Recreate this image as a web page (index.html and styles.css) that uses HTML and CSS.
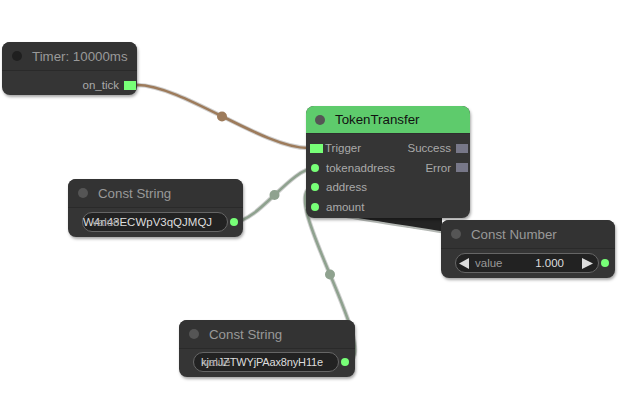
FILE: index.html
```html
<!DOCTYPE html>
<html>
<head>
<meta charset="utf-8">
<link rel="stylesheet" href="styles.css">
</head>
<body>
<div class="canvas">
  <svg class="links" width="621" height="402" viewBox="0 0 621 402">
    <path class="wedge" d="M318,216 L442,216 L442,231 L433,231 L406,227 L380,222 L359,219 L340,216 Z"/>
    <path class="lk-border" d="M137,85 C182,85 263,148 308,148"/>
    <path class="lk lk-brown" d="M137,85 C182,85 263,148 308,148"/>
    <circle class="mid-brown" cx="222" cy="116.5" r="5"/>
    <path class="lk-border" d="M234,222 C258,222 291,168 315,168"/>
    <path class="lk lk-sage" d="M234,222 C258,222 291,168 315,168"/>
    <circle class="mid-sage" cx="274.5" cy="195" r="5"/>
    <path class="lk-border" d="M345,362 C389,362 271,187 315,187"/>
    <path class="lk lk-sage" d="M345,362 C389,362 271,187 315,187"/>
    <circle class="mid-sage" cx="330" cy="274.5" r="5"/>
    <path class="lk lk-gray" d="M605,263 C679,263 241,207 315,207"/>
  </svg>

  <div class="node n-timer">
    <div class="title"><span class="tdot tdot-dark"></span><span class="ttext">Timer: 10000ms</span></div>
    <div class="body body-timer">
      <div class="row out-row"><span class="label">on_tick</span><span class="box box-green"></span></div>
    </div>
  </div>

  <div class="node n-token">
    <div class="title title-green"><span class="tdot"></span><span class="ttext ttext-dark">TokenTransfer</span></div>
    <div class="body body-token">
      <div class="slots">
        <div class="col">
          <div class="row in-row"><span class="in-slot"><span class="box box-green box-wide"></span></span><span class="label">Trigger</span></div>
          <div class="row in-row"><span class="in-slot"><span class="circ"></span></span><span class="label">tokenaddress</span></div>
          <div class="row in-row"><span class="in-slot"><span class="circ"></span></span><span class="label">address</span></div>
          <div class="row in-row"><span class="in-slot"><span class="circ"></span></span><span class="label">amount</span></div>
        </div>
        <div class="col col-out">
          <div class="row out-row"><span class="label">Success</span><span class="box box-gray"></span></div>
          <div class="row out-row"><span class="label">Error</span><span class="box box-gray"></span></div>
        </div>
      </div>
    </div>
  </div>

  <div class="node n-str1">
    <div class="title"><span class="tdot"></span><span class="ttext">Const String</span></div>
    <div class="body body-widget">
      <div class="pill">
        <span class="pill-name">value</span>
        <span class="pill-val">W4n43ECWpV3qQJMQJ</span>
      </div>
      <span class="circ"></span>
    </div>
  </div>

  <div class="node n-num">
    <div class="title"><span class="tdot"></span><span class="ttext">Const Number</span></div>
    <div class="body body-widget">
      <div class="pill pill-num">
        <svg class="arrow" width="11" height="11" viewBox="0 0 11 11"><polygon points="10,0 10,11 0,5.5"/></svg>
        <span class="num-name">value</span>
        <span class="num-val">1.000</span>
        <svg class="arrow" width="11" height="11" viewBox="0 0 11 11"><polygon points="0,0 0,11 11,5.5"/></svg>
      </div>
      <span class="circ"></span>
    </div>
  </div>

  <div class="node n-str2">
    <div class="title"><span class="tdot"></span><span class="ttext">Const String</span></div>
    <div class="body body-widget">
      <div class="pill">
        <span class="pill-name">value</span>
        <span class="pill-val pill-val-tight">kjmJZTWYjPAax8nyH11e</span>
      </div>
      <span class="circ"></span>
    </div>
  </div>
</div>
</body>
</html>
```

FILE: styles.css
```css
* { box-sizing: border-box; }
html, body { margin: 0; padding: 0; background: #fff; }
body { font-family: "Liberation Sans", Arial, sans-serif; }

.canvas {
  position: relative;
  width: 621px;
  height: 402px;
  overflow: hidden;
  background: #fff;
}

.links { position: absolute; left: 0; top: 0; }
.lk { fill: none; stroke-width: 2.6; stroke-linecap: round; }
.lk-border { fill: none; stroke: rgba(0,0,0,0.18); stroke-width: 4.5; }
.lk-brown { stroke: #9d7b5b; }
.lk-sage { stroke: #8fa28f; }
.lk-gray { stroke: #b4b8b4; stroke-width: 2.2; }
.mid-brown { fill: #9d7b5b; }
.mid-sage { fill: #8fa28f; }
.wedge { fill: #242424; }

.node {
  position: absolute;
  background: #353535;
  border-radius: 8px;
  box-shadow: 1px 2px 3px rgba(0,0,0,0.35);
  display: flex;
  flex-direction: column;
}
.n-timer { left: 2px; top: 42px; width: 135px; height: 53px; }
.n-token { left: 306px; top: 106px; width: 164px; height: 112px; }
.n-str1 { left: 68px; top: 179px; width: 175px; height: 58px; }
.n-num { left: 441px; top: 220px; width: 174px; height: 58px; }
.n-str2 { left: 179px; top: 320px; width: 176px; height: 57px; }

.title {
  height: 29px;
  flex: none;
  display: flex;
  align-items: center;
  gap: 10px;
  padding-left: 10px;
  background: #333;
  border-radius: 8px 8px 0 0;
  border-bottom: 1px solid #2a2a2a;
}
.n-token .title { height: 28px; padding-left: 9px; }
.title-green { background: #5ecb6c; border-bottom-color: #2e2e2e; }
.tdot {
  width: 10px;
  height: 10px;
  border-radius: 50%;
  background: #555;
  flex: none;
}
.tdot-dark { background: #1f1f1f; }
.ttext {
  font-size: 13.3px;
  color: #999;
  white-space: nowrap;
}
.ttext-dark { color: #111; }

.body { flex: 1; }
.label { font-size: 11.5px; color: #aaa; white-space: nowrap; }

.row { height: 19.5px; display: flex; align-items: center; }

.body-timer { padding: 4.5px 1px 0 0; }
.out-row { justify-content: flex-end; gap: 5px; }

.box { display: block; width: 12px; height: 9px; }
.box-wide { width: 13px; }
.box-green { background: #7f7; }
.box-gray { background: #778; }

.body-token { padding: 4.5px 2px 0 0; }
.slots { display: flex; justify-content: space-between; }
.col { display: flex; flex-direction: column; }
.in-row { gap: 1px; }
.in-slot {
  width: 13px;
  margin-left: 4px;
  display: flex;
  align-items: center;
}
.in-slot .circ { margin-left: 1px; }
.in-slot + .label { margin-left: 1px; }
.in-row:not(:first-child) .label { margin-left: 2px; }

.circ {
  display: block;
  width: 8px;
  height: 8px;
  border-radius: 50%;
  background: #7f7;
  flex: none;
}

.body-widget {
  display: flex;
  align-items: flex-start;
  gap: 2px;
  padding: 4px 5px 0 14px;
}
.n-str2 .body-widget { padding-top: 3px; padding-right: 6px; }
.n-num .body-widget { padding-right: 6px; }
.body-widget .circ { margin-top: 6px; }

.pill {
  position: relative;
  flex: 1;
  height: 20px;
  border: 1px solid #666;
  border-radius: 10px;
  background: #222;
  display: flex;
  align-items: center;
  justify-content: flex-end;
  padding-right: 15px;
  font-size: 11.5px;
}
.pill-name {
  position: absolute;
  left: 9px;
  top: 3px;
  color: #999;
}
.pill-val { color: #ddd; white-space: nowrap; }
.pill-val-tight { font-size: 11px; letter-spacing: -0.15px; }

.pill-num {
  justify-content: flex-start;
  padding: 0 5px 0 3px;
}
.arrow { fill: #ddd; flex: none; }
.num-name { color: #999; margin-left: 5px; }
.num-val { color: #ddd; margin-left: auto; margin-right: 18px; }
```
